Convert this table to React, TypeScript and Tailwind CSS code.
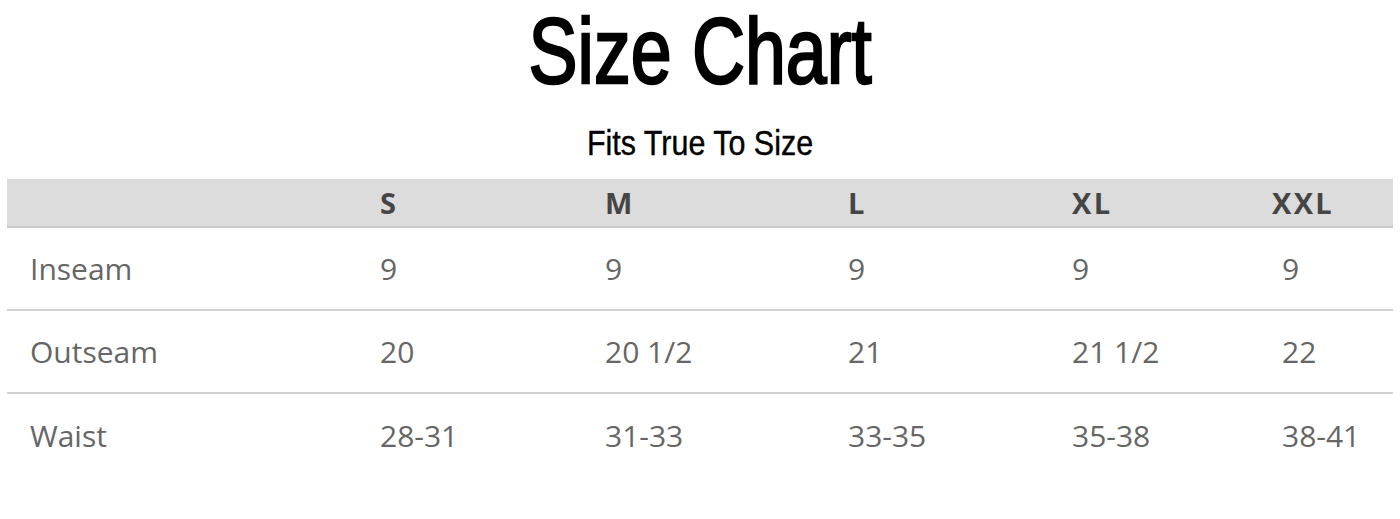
const sizes = ["S", "M", "L", "XL", "XXL"];

const rows = [
  { label: "Inseam", values: ["9", "9", "9", "9", "9"] },
  { label: "Outseam", values: ["20", "20 1/2", "21", "21 1/2", "22"] },
  { label: "Waist", values: ["28-31", "31-33", "33-35", "35-38", "38-41"] },
];

const cols = "grid grid-cols-[373px_225px_243px_224px_200px_1fr]";

export default function App() {
  return (
    <div className="w-[1400px] h-[519px] bg-white overflow-hidden">
      {/* Heading */}
      <div className="flex flex-col items-center pt-[1px]">
        <h1 className="font-['Liberation_Sans',Arial,sans-serif] text-[93px] leading-[100px] text-black scale-x-[0.79] [-webkit-text-stroke:2.5px_black]">
          Size Chart
        </h1>
        <p className="mt-[22px] font-['Liberation_Sans',Arial,sans-serif] text-[35px] leading-[40px] text-black scale-x-[0.87] [-webkit-text-stroke:0.4px_black]">
          Fits True To Size
        </p>
      </div>

      {/* Table */}
      <div className="mx-[7px] mt-[16px] font-['Open_Sans',sans-serif]">
        <div className={`${cols} h-[49px] items-center bg-[#dcdcdc] border-b-2 border-[#c9c9c9]`}>
          <div />
          {sizes.map((s) => (
            <div key={s} className="text-[29px] font-bold tracking-[0.08em] text-[#454545]">
              {s}
            </div>
          ))}
        </div>
        {rows.map((row, i) => (
          <div
            key={row.label}
            className={`${cols} h-[83px] items-center text-[30px] text-[#666] ${
              i < rows.length - 1 ? "border-b-2 border-[#d2d2d2]" : ""
            }`}
          >
            <div className="pl-[23px]">{row.label}</div>
            {row.values.map((v, j) => (
              <div key={j} className={j === 4 ? "pl-[10px]" : ""}>
                {v}
              </div>
            ))}
          </div>
        ))}
      </div>
    </div>
  );
}
